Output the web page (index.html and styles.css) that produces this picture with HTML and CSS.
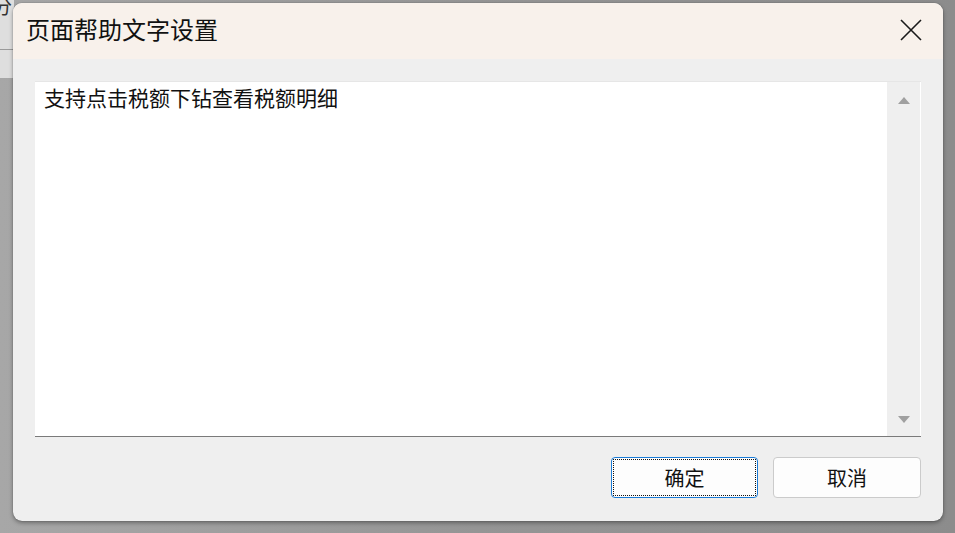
FILE: index.html
```html
<!DOCTYPE html>
<html lang="zh-CN">
<head>
<meta charset="utf-8">
<title>页面帮助文字设置</title>
<link rel="stylesheet" href="styles.css">
</head>
<body>
<div class="backdrop">
  <div class="bd-topleft">
    <span class="bd-char">分</span>
    <div class="bd-line"></div>
    <div class="bd-red"></div>
  </div>
</div>
<div class="dialog">
  <div class="dlg-header">
    <div class="dlg-title">页面帮助文字设置</div>
    <button class="dlg-close" aria-label="关闭">
      <svg width="22" height="22" viewBox="0 0 22 22"><path d="M1 1 L21 21 M21 1 L1 21" stroke="#1a1a1a" stroke-width="1.6" fill="none"/></svg>
    </button>
  </div>
  <div class="dlg-body">
    <div class="textbox">
      <div class="text-content">支持点击税额下钻查看税额明细</div>
      <div class="scrollbar">
        <svg class="arrow" width="12" height="7" viewBox="0 0 12 7"><path d="M6 0 L12 7 L0 7 Z" fill="#a0a0a0"/></svg>
        <svg class="arrow" width="12" height="7" viewBox="0 0 12 7"><path d="M0 0 L12 0 L6 7 Z" fill="#a0a0a0"/></svg>
      </div>
    </div>
    <div class="btn-row">
      <button class="btn btn-focus"><span class="btn-inner">确定</span></button>
      <button class="btn"><span class="btn-inner">取消</span></button>
    </div>
  </div>
</div>
</body>
</html>
```

FILE: styles.css
```css
html, body {
  margin: 0;
  padding: 0;
}
body {
  width: 955px;
  height: 533px;
  overflow: hidden;
  background: linear-gradient(to right, #a7a7a7 0%, #959595 50%, #8c8c8c 100%);
  font-family: "Noto Sans CJK SC", "Noto Sans", sans-serif;
  position: relative;
}
.backdrop {
  position: absolute;
  inset: 0;
}
.bd-topleft {
  position: absolute;
  left: 0;
  top: 0;
  width: 14px;
  height: 78px;
  background: #dedede;
  overflow: hidden;
}
.bd-char {
  position: absolute;
  left: -8px;
  top: -9px;
  font-size: 20px;
  color: #333;
}
.bd-line {
  position: absolute;
  left: 0;
  top: 49px;
  width: 14px;
  height: 1px;
  background: #9a9a9a;
}
.bd-red {
  position: absolute;
  left: 0;
  top: 79px;
  width: 14px;
  height: 1px;
  background: repeating-linear-gradient(to right, #e00 0 3px, transparent 3px 5px);
}
.dialog {
  position: absolute;
  left: 13px;
  top: 3px;
  width: 930px;
  height: 518px;
  border-radius: 9px;
  background: #efefef;
  box-shadow: 0 2px 4px rgba(0,0,0,0.35), 0 0 1px rgba(0,0,0,0.5);
  overflow: hidden;
  display: flex;
  flex-direction: column;
}
.dlg-header {
  height: 56px;
  box-sizing: border-box;
  flex: none;
  background: #f8f1eb;
  display: flex;
  align-items: center;
  justify-content: space-between;
  padding: 0 21px 4px 13px;
}
.dlg-title {
  font-size: 24px;
  color: #111;
  line-height: 1;
}
.dlg-close {
  border: 0;
  background: transparent;
  padding: 0;
  width: 22px;
  height: 22px;
  display: flex;
  margin-top: 2px;
}
.dlg-body {
  flex: 1;
  padding: 22px 22px 23px 22px;
  display: flex;
  flex-direction: column;
  gap: 20px;
}
.textbox {
  height: 356px;
  box-sizing: border-box;
  background: #fff;
  border-top: 1px solid #e6e6e6;
  border-bottom: 1px solid #7a7a7a;
  display: flex;
}
.text-content {
  flex: 1;
  padding: 2px 9px;
  font-size: 21px;
  line-height: 26px;
  color: #111;
}
.scrollbar {
  width: 33px;
  margin-right: 1px;
  background: #efefef;
  display: flex;
  flex-direction: column;
  justify-content: space-between;
  align-items: center;
  padding: 15px 0 13px;
}
.btn-row {
  display: flex;
  justify-content: flex-end;
  gap: 15px;
}
.btn {
  height: 41px;
  width: 148px;
  box-sizing: border-box;
  border: 1px solid #cbcbcb;
  border-radius: 4px;
  background: #fdfdfd;
  padding: 1px;
  font-family: "Noto Sans CJK SC", sans-serif;
  font-size: 20px;
  color: #111;
  display: flex;
}
.btn-focus {
  width: 147px;
  border-color: #1a7bd6;
}
.btn-inner {
  flex: 1;
  display: flex;
  align-items: center;
  justify-content: center;
  border: 1px dotted transparent;
}
.btn-focus .btn-inner {
  border-color: #111;
}
```
